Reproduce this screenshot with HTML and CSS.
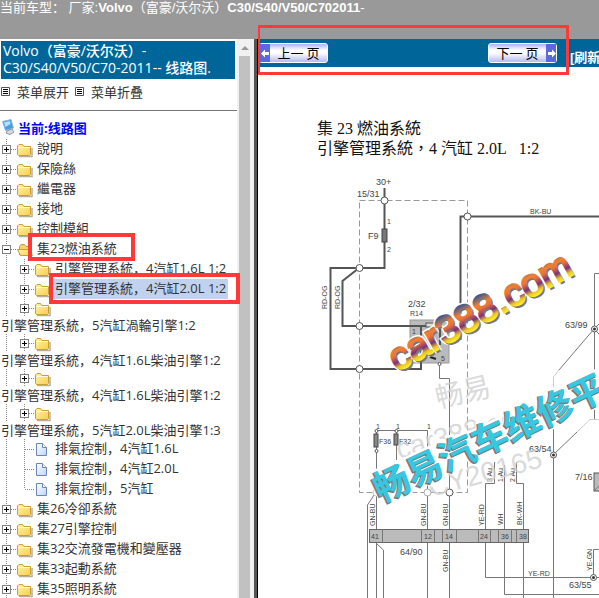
FILE: index.html
```
<!DOCTYPE html>
<html lang="zh">
<head>
    <meta charset="UTF-8">
    <meta name="viewport" content="width=device-width, initial-scale=1.0">
    <title>线路图</title>
    <link rel="stylesheet" href="styles.css">
</head>
<body>
    <svg class="defs" width="0" height="0" aria-hidden="true">
        <defs>
            <linearGradient id="folderFill" x1="0" y1="0" x2="1" y2="1">
                <stop offset="0" stop-color="#fff3a8"/>
                <stop offset="1" stop-color="#f7cf52"/>
            </linearGradient>
            <linearGradient id="pageFill" x1="0" y1="0" x2="1" y2="1">
                <stop offset="0" stop-color="#fff"/>
                <stop offset="1" stop-color="#bcd4fa"/>
            </linearGradient>
            <symbol id="folder" viewBox="0 0 18 16">
                <path d="M2 14.500H15V6" fill="none" stroke="#b5b09a" stroke-width="1.500"/>
                <path d="M.5 12.500V4L2 2.500H5.500L7 4.500H13.500V12.500L12.500 13.500H1.500Z" fill="url(#folderFill)" stroke="#c99f33"/>
                <path d="M1.500 5.500H13" stroke="#fffbd9"/>
            </symbol>
            <symbol id="folderOpen" viewBox="0 0 18 16">
                <path d="M2.500 13V4.500L4 2.500H7.500L9 4.500H13.500V14" fill="#f3d36a" stroke="#c99f33"/>
                <path d="M.5 7.500H12L15.500 13.500H3.500Z" fill="url(#folderFill)" stroke="#c99f33"/>
            </symbol>
            <symbol id="page" viewBox="0 0 18 16">
                <path d="M1.500 1.500H7.500L11.500 5.500V13.500H1.500Z" fill="url(#pageFill)" stroke="#6b85b5"/>
                <path d="M7.500 1.500V5.500H11.500" fill="#fff" stroke="#6b85b5"/>
            </symbol>
            <symbol id="list" viewBox="0 0 9 9">
                <path d="M.5 .5H8.500V8.500H.5Z" fill="#fff" stroke="#555"/>
                <path d="M2 2.500H7M2 4.500H7M2 6.500H7" stroke="#000"/>
            </symbol>
        </defs>
    </svg>

    <header class="top">当前车型： 厂家:<b>Volvo</b>（富豪/沃尔沃）<b>C30/S40/V50/C702011</b>-</header>

    <div class="frames">
        <aside class="sidebar">
            <div class="menu">
                <h1 class="menu-title"><span>Volvo（富豪/沃尔沃）-</span> <span>C30/S40/V50/C70-2011-- 线路图.</span></h1>
                <div class="menu-actions">
                    <button class="menu-button"><svg width="9" height="9"><use href="#list"/></svg>菜单展开</button>
                    <button class="menu-button"><svg width="9" height="9"><use href="#list"/></svg>菜单折叠</button>
                </div>
                <nav>
                    <a class="root" href="#">
                        <svg width="13" height="16" viewBox="0 0 13 16">
                            <path d="M.5 2.500L9 .5 11.500 9 3.500 11.500Z" fill="#3f9fe8" stroke="#9fb3c6"/>
                            <path d="M2 3.500L8 2 8.500 5 3.500 8Z" fill="#b5e0ff"/>
                            <path d="M5 12L10 10 12 13 8 15.500 4 14Z" fill="#d9dde2" stroke="#8994a0"/>
                        </svg>当前:线路图</a>
                    <ul class="tree">
                        <li class="row"><span class="line"><button class="toggle" aria-label="展开"></button></span><svg class="icon"><use href="#folder"/></svg><a href="#">說明</a></li>
                        <li class="row"><span class="line"><button class="toggle" aria-label="展开"></button></span><svg class="icon"><use href="#folder"/></svg><a href="#">保險絲</a></li>
                        <li class="row"><span class="line"><button class="toggle" aria-label="展开"></button></span><svg class="icon"><use href="#folder"/></svg><a href="#">繼電器</a></li>
                        <li class="row"><span class="line"><button class="toggle" aria-label="展开"></button></span><svg class="icon"><use href="#folder"/></svg><a href="#">接地</a></li>
                        <li class="row"><span class="line"><button class="toggle" aria-label="展开"></button></span><svg class="icon"><use href="#folder"/></svg><a href="#">控制模組</a></li>
                        <li>
                            <div class="row"><span class="line"><button class="toggle open" aria-label="折叠"></button></span><svg class="icon"><use href="#folderOpen"/></svg><a class="marked" href="#">集23燃油系統</a></div>
                            <ul>
                                <li class="row"><span class="line indent"></span><span class="line"><button class="toggle" aria-label="展开"></button></span><svg class="icon"><use href="#folder"/></svg><a href="#">引擎管理系統，4汽缸1.6L 1:2</a></li>
                                <li class="row"><span class="line indent"></span><span class="line"><button class="toggle" aria-label="展开"></button></span><svg class="icon"><use href="#folder"/></svg><a class="marked selected" href="#">引擎管理系統，4汽缸2.0L 1:2</a></li>
                                <li class="row wrapped"><span class="line indent"></span><span class="line"><button class="toggle" aria-label="展开"></button></span><svg class="icon"><use href="#folder"/></svg><a href="#">引擎管理系統，5汽缸渦輪引擎1:2</a></li>
                                <li class="row wrapped"><span class="line indent"></span><span class="line"><button class="toggle" aria-label="展开"></button></span><svg class="icon"><use href="#folder"/></svg><a href="#">引擎管理系統，4汽缸1.6L柴油引擎1:2</a></li>
                                <li class="row wrapped"><span class="line indent"></span><span class="line"><button class="toggle" aria-label="展开"></button></span><svg class="icon"><use href="#folder"/></svg><a href="#">引擎管理系統，4汽缸1.6L柴油引擎1:2</a></li>
                                <li class="row wrapped"><span class="line indent"></span><span class="line"><button class="toggle" aria-label="展开"></button></span><svg class="icon"><use href="#folder"/></svg><a href="#">引擎管理系統，5汽缸2.0L柴油引擎1:3</a></li>
                                <li class="row"><span class="line indent"></span><span class="line leaf"></span><svg class="icon"><use href="#page"/></svg><a href="#">排氣控制，4汽缸1.6L</a></li>
                                <li class="row"><span class="line indent"></span><span class="line leaf"></span><svg class="icon"><use href="#page"/></svg><a href="#">排氣控制，4汽缸2.0L</a></li>
                                <li class="row"><span class="line indent"></span><span class="line leaf last"></span><svg class="icon"><use href="#page"/></svg><a href="#">排氣控制，5汽缸</a></li>
                            </ul>
                        </li>
                        <li class="row"><span class="line"><button class="toggle" aria-label="展开"></button></span><svg class="icon"><use href="#folder"/></svg><a href="#">集26冷卻系統</a></li>
                        <li class="row"><span class="line"><button class="toggle" aria-label="展开"></button></span><svg class="icon"><use href="#folder"/></svg><a href="#">集27引擎控制</a></li>
                        <li class="row"><span class="line"><button class="toggle" aria-label="展开"></button></span><svg class="icon"><use href="#folder"/></svg><a href="#">集32交流發電機和變壓器</a></li>
                        <li class="row"><span class="line"><button class="toggle" aria-label="展开"></button></span><svg class="icon"><use href="#folder"/></svg><a href="#">集33起動系統</a></li>
                        <li class="row"><span class="line"><button class="toggle" aria-label="展开"></button></span><svg class="icon"><use href="#folder"/></svg><a href="#">集35照明系統</a></li>
                    </ul>
                </nav>
            </div>
            <div class="scrollbar">
                <svg width="15" height="17" viewBox="0 0 15 17"><path d="M4 11L8 7 12 11Z" fill="#999"/></svg>
                <div class="thumb"></div>
            </div>
        </aside>

        <main class="content">
            <div class="toolbar">
                <div class="pager">
                    <button class="page-button"><span class="arrow"><svg width="9" height="9" viewBox="0 0 9 9"><path d="M0 4.500L4 .5V3H8V6H4V8.500Z" fill="#fff"/></svg></span><span class="label">上一 页</span></button>
                    <button class="page-button"><span class="label">下一 页</span><span class="arrow"><svg width="9" height="9" viewBox="0 0 9 9"><path d="M9 4.500L5 .5V3H1V6H5V8.500Z" fill="#fff"/></svg></span></button>
                </div>
                <a class="refresh" href="#">[刷新</a>
            </div>
            <svg class="diagram" width="341" height="531" viewBox="258 67 341 531">
                <defs>
                    <linearGradient id="rainbow" gradientUnits="userSpaceOnUse" x1="0" y1="-28" x2="0" y2="1">
                        <stop offset="0" stop-color="#2f5597"/>
                        <stop offset=".3" stop-color="#f08030"/>
                        <stop offset=".45" stop-color="#e8743a"/>
                        <stop offset=".68" stop-color="#7a3080"/>
                        <stop offset=".85" stop-color="#e8c820"/>
                        <stop offset="1" stop-color="#fff02a"/>
                    </linearGradient>
                </defs>

                <g class="caption" lang="zh-TW">
                    <text x="317" y="134">集 23 燃油系統</text>
                    <text x="317" y="154">引擎管理系統，4 汽缸 2.0L&#160;&#160; 1:2</text>
                </g>

                <!-- component boxes -->
                <rect x="410" y="320" width="39" height="43" fill="#bbb" stroke="#999"/>
                <rect x="594" y="473" width="12" height="18" fill="#bbb" stroke="#555"/>
                <path class="wire" d="M595 490L606 478"/>
                <path class="dash" d="M359.500 200.500H467.500V492.500H359.500Z"/>

                <!-- supply lines -->
                <g class="heavy">
                    <path d="M384.500 188V268H330.500V369H421V326"/>
                    <path d="M359 268L342.500 281V326H440V345"/>
                    <path d="M599 216.500H460.500V340"/>
                </g>
                <rect x="382" y="229" width="5" height="13" fill="#777" stroke="#444"/>
                <rect x="426" y="323" width="14" height="4" fill="#ddd" stroke="#555"/>
                <path d="M430 357L436 359" stroke="#222" stroke-width="2"/>

                <!-- signal lines -->
                <g class="wire">
                    <path d="M439.500 364V378.500H449.500V598"/>
                    <path d="M376.500 431V598M376.500 430.500H427.500V598"/>
                    <path d="M396.500 431V460"/>
                    <path d="M376 492L367.500 505V598"/>
                    <path d="M376 543L383.500 550V598"/>
                    <path d="M494.500 462V483.500H485.500V577.500H599"/>
                    <path d="M504.500 465V594.500H599"/>
                    <path d="M516.500 462V483.500H523.500V598"/>
                    <path d="M599 273.500H594.500V420"/>
                    <path d="M594 329L559 370M594 329L599 324M594 329L599 334"/>
                    <path d="M559 370L553.500 377V395" stroke="#ccc"/>
                    <path d="M553.500 400V598"/>
                    <path d="M553 455L577 432"/>
                    <path d="M577 432L590 419.500H599" stroke="#ccc"/>
                    <path d="M593.500 577V549.500H599"/>
                </g>
                <g fill="#888" stroke="#444">
                    <rect x="374" y="434" width="4" height="13"/>
                    <rect x="394" y="434" width="4" height="11"/>
                </g>

                <!-- connector 64/90 -->
                <rect x="369.500" y="529.500" width="159" height="13" fill="#bbb" stroke="#666"/>
                <path class="wire" d="M382.500 529V542M421.500 529V542M434.500 529V542M442.500 529V542M456.500 529V542M478.500 529V542M490.500 529V542M498.500 529V542M511.500 529V542M516.500 529V542"/>

                <g fill="#fff" stroke="#555">
                    <circle cx="384.500" cy="200.500" r="3.500"/>
                    <circle cx="467.500" cy="216.500" r="3.500"/>
                    <circle cx="359.500" cy="268" r="3.500"/>
                    <circle cx="359.500" cy="326" r="3.500"/>
                    <circle cx="359.500" cy="369" r="3.500"/>
                    <circle cx="439.500" cy="364" r="1.500"/>
                    <circle cx="376.500" cy="431" r="1.500"/>
                    <circle cx="396.500" cy="431" r="1.500"/>
                    <circle cx="376.500" cy="451" r="1.500"/>
                    <circle cx="376.500" cy="492.500" r="3.500" stroke="#ccc"/>
                    <circle cx="427.500" cy="492.500" r="3.500" stroke="#aaa"/>
                    <circle cx="449.500" cy="492.500" r="3.500"/>
                    <circle cx="594.500" cy="329" r="3"/>
                    <circle cx="553.500" cy="455" r="3"/>
                    <circle cx="593.500" cy="577.500" r="3"/>
                </g>
                <g fill="#333">
                    <circle cx="594.500" cy="329" r="1.500"/>
                    <circle cx="553.500" cy="455" r="1.500"/>
                    <circle cx="593.500" cy="577.500" r="1.500"/>
                </g>

                <g class="part">
                    <text x="376" y="185">30+</text>
                    <text x="357" y="197">15/31</text>
                    <text x="368" y="239">F9</text>
                    <text x="408" y="307">2/32</text>
                    <text x="565" y="328">63/99</text>
                    <text x="529" y="452">63/54</text>
                    <text x="575" y="480">7/16</text>
                    <text x="400" y="555">64/90</text>
                    <text x="569" y="588">63/55</text>
                </g>
                <g class="pin">
                    <text x="387" y="224">1</text>
                    <text x="387" y="252">2</text>
                    <text x="530" y="214">BK-BU</text>
                    <text x="410" y="316">R14</text>
                    <text x="412" y="334">1</text>
                    <text x="441" y="361">5</text>
                    <text x="376" y="429">1</text>
                    <text x="396" y="429">1</text>
                    <text x="427" y="429">1</text>
                    <text x="379" y="444">F36</text>
                    <text x="399" y="444">F32</text>
                    <text x="371" y="539">41</text>
                    <text x="424" y="539">12</text>
                    <text x="445" y="539">14</text>
                    <text x="480" y="539">24</text>
                    <text x="501" y="539">36</text>
                    <text x="519" y="539">38</text>
                    <text x="528" y="576">YE-RD</text>
                    <text transform="translate(327 309) rotate(-90)">RD-OG</text>
                    <text transform="translate(340 309) rotate(-90)">RD-OG</text>
                    <text transform="translate(375 526) rotate(-90)">GN-BU</text>
                    <text transform="translate(426 526) rotate(-90)">GN-BU</text>
                    <text transform="translate(448 526) rotate(-90)">GN-BU</text>
                    <text transform="translate(484 526) rotate(-90)">YE-RD</text>
                    <text transform="translate(503 525) rotate(-90)">WH</text>
                    <text transform="translate(522 525) rotate(-90)">BK-WH</text>
                    <text transform="translate(448 572) rotate(-90)">GN-BU</text>
                    <text transform="translate(592 571) rotate(-90)">YE-GN</text>
                    <text transform="translate(492 482) rotate(-90)">3 Au</text>
                    <text transform="translate(503 482) rotate(-90)">1 Au</text>
                    <text transform="translate(515 482) rotate(-90)">2 Au</text>
                </g>

                <!-- watermarks -->
                <g class="ghost">
                    <text transform="translate(438 408) rotate(-13)">畅易</text>
                    <text transform="translate(399 459) rotate(-15)">car388.com</text>
                    <text transform="translate(431 497) rotate(-15)">CY20165</text>
                </g>
                <g class="site">
                    <text class="halo" transform="translate(397 372) rotate(-29)">car388.com</text>
                    <text class="shadow" transform="translate(399 374) rotate(-29)">car388.com</text>
                    <text fill="url(#rainbow)" stroke="url(#rainbow)" transform="translate(397 372) rotate(-29)">car388.com</text>
                </g>
                <g class="brand">
                    <text class="halo" transform="translate(381 503) rotate(-25)">畅易汽车维修平</text>
                    <text class="shadow" transform="translate(380 504) rotate(-25)">畅易汽车维修平</text>
                    <text transform="translate(381 503) rotate(-25)">畅易汽车维修平</text>
                </g>
            </svg>
        </main>
    </div>
</body>
</html>
```
FILE: styles.css
```
* {
    margin: 0;
    padding: 0;
    box-sizing: border-box;
}
body {
    display: flex;
    flex-direction: column;
    height: 100vh;
    overflow: hidden;
    background: #fff;
    color: #333;
    font-family: "Open Sans", "Noto Sans CJK TC", sans-serif;
    font-size: 13px;
}
ul {
    list-style: none;
}
a {
    color: inherit;
    text-decoration: none;
}
button {
    border: none;
    background: none;
    color: inherit;
    font: inherit;
    cursor: pointer;
}
.defs {
    position: absolute;
}
.top {
    flex: 0 0 39px;
    background: #999;
    color: #fff;
    font-family: "Liberation Sans", "Noto Sans CJK SC", sans-serif;
    line-height: 15px;
    white-space: nowrap;
}
.frames {
    flex: 1;
    display: flex;
    min-height: 0;
}

/* left frame */
.sidebar {
    flex: 0 0 258px;
    display: flex;
    border-right: 1px solid #000;
}
.menu {
    flex: 1;
    min-width: 0;
    padding-top: 2px;
}
.menu-title {
    margin: 0 2px 0 1px;
    padding: 1px 2px 3px;
    background: #069;
    color: #fff;
    font-family: "Open Sans", "Noto Sans CJK SC", sans-serif;
    font-size: 14px;
    font-weight: 500;
    line-height: 17px;
    white-space: nowrap;
}
.menu-title span {
    display: block;
}
.menu-actions {
    display: flex;
    gap: 6px;
    height: 32px;
    padding: 2px 1px 0;
    border-bottom: 1px solid #777;
    font-family: "Noto Sans CJK SC", sans-serif;
}
.menu-button {
    display: flex;
    align-items: center;
    gap: 7px;
    height: 20px;
}
.root {
    display: flex;
    align-items: center;
    gap: 3px;
    height: 20px;
    margin: 6px 0 2px 2px;
    color: #00f;
    font-family: "Open Sans", "Noto Sans CJK SC", sans-serif;
    font-weight: bold;
}
.row {
    display: flex;
    flex-wrap: wrap;
    align-items: center;
    line-height: 18px;
    white-space: nowrap;
}
.row a {
    padding-bottom: 2px;
}
.line {
    display: flex;
    align-items: center;
    width: 17px;
    height: 20px;
    padding-left: 2px;
    background:
        repeating-linear-gradient(#888 0 1px, transparent 1px 2px) 6px 0 / 1px 100% no-repeat,
        repeating-linear-gradient(90deg, #888 0 1px, transparent 1px 2px) 7px 50% / 11px 1px no-repeat;
}
.line.indent {
    width: 18px;
    background: repeating-linear-gradient(#888 0 1px, transparent 1px 2px) 6px 0 / 1px 100% no-repeat;
}
.line.last {
    background-size: 1px 50%, 11px 1px;
}
.toggle {
    width: 9px;
    height: 9px;
    border: 1px solid #808080;
    background:
        linear-gradient(#000, #000) center / 5px 1px no-repeat,
        linear-gradient(#000, #000) center / 1px 5px no-repeat,
        #fff;
}
.toggle.open {
    background: linear-gradient(#000, #000) center / 5px 1px no-repeat, #fff;
}
.icon {
    width: 18px;
    height: 16px;
    margin: 2px 2px 0 0;
}
.wrapped .line {
    height: 18px;
}
.row.wrapped a {
    flex: 0 0 100%;
    padding: 0 0 0 1px;
    line-height: 17px;
}
.row .marked {
    position: relative;
}
.marked::after {
    content: "";
    position: absolute;
    z-index: 1;
    inset: -6px -18px -2px -9px;
    border: 4px solid #ff3838;
    pointer-events: none;
}
.row .selected {
    margin-left: -2px;
    padding: 0 2px 2px;
    background: #c1d2ee;
}
.selected::after {
    inset: -6px -12px -5px -4px;
}
.scrollbar {
    display: flex;
    flex-direction: column;
    width: 20px;
    padding-right: 4px;
    border-right: 3px solid #555;
    background: #f1f1f1;
}
.scrollbar .thumb {
    flex: 1;
    margin-left: 2px;
    background: #c1c1c1;
}

/* right frame */
.content {
    flex: 1;
    min-width: 0;
    overflow-x: clip;
}
.toolbar {
    display: flex;
    height: 28px;
    background: #069;
    white-space: nowrap;
}
.pager {
    position: relative;
    flex: 0 0 311px;
    display: flex;
    justify-content: space-between;
    align-items: center;
    padding: 0 12px 0 1px;
}
.pager::after {
    content: "";
    position: absolute;
    inset: -14px 0 -8px -1px;
    border: 3px solid #ff3838;
    pointer-events: none;
}
.page-button {
    display: flex;
    width: 69px;
    height: 20px;
    border: 1px solid #fff;
    border-radius: 3px;
    background: linear-gradient(#aeb2f2, #fff 35%, #fff 50%, #b6b8f4);
    color: #000;
    font-family: "Noto Sans CJK SC", sans-serif;
    font-size: 13px;
    line-height: 17px;
}
.page-button .label {
    flex: 1;
    text-align: center;
}
.page-button .arrow {
    display: flex;
    align-items: center;
    justify-content: center;
    width: 10px;
    background: #5b68e0;
}
.refresh {
    padding-left: 1px;
    color: #fff;
    font-family: "Liberation Sans", "Noto Sans CJK SC", sans-serif;
    font-size: 13px;
    font-weight: bold;
    line-height: 38px;
}

/* wiring diagram */
.diagram {
    display: block;
    font-family: "Liberation Sans", "Noto Sans CJK SC", sans-serif;
}
.caption {
    fill: #111;
    font-family: "Liberation Serif", "Noto Sans CJK TC", serif;
    font-size: 16px;
}
.part {
    fill: #444;
    font-size: 9px;
}
.pin {
    fill: #444;
    font-size: 7px;
}
.wire {
    fill: none;
    stroke: #777;
}
.heavy {
    fill: none;
    stroke: #555;
    stroke-width: 2;
}
.dash {
    fill: none;
    stroke: #999;
    stroke-dasharray: 6 3;
}
.ghost {
    fill: #d0d0d0;
    fill-opacity: .8;
    font-size: 28px;
}
.site {
    font-size: 39px;
    stroke-width: 2;
}
.brand {
    fill: #35c8e0;
    font-size: 36px;
    font-weight: bold;
}
.halo {
    fill: #fff;
    stroke: #fff;
    stroke-width: 5;
}
.shadow {
    fill: #777;
    stroke: #777;
    stroke-width: 1;
}
```
